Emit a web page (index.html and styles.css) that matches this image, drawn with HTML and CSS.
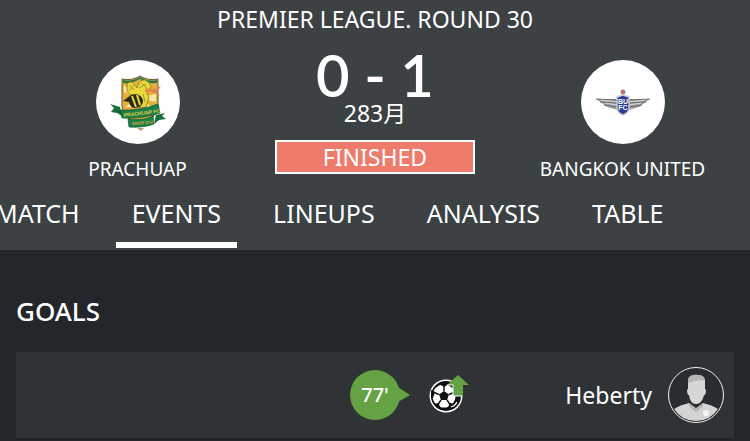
FILE: index.html
```
<!DOCTYPE html>
<html lang="en">
<head>
<meta charset="utf-8">
<meta name="viewport" content="width=device-width, initial-scale=1">
<title>Prachuap 0 - 1 Bangkok United</title>
<link rel="stylesheet" href="styles.css">
</head>
<body>
<header class="match">
  <h1 class="league">PREMIER LEAGUE. ROUND 30</h1>
  <div class="scoreboard">
    <div class="team">
      <span class="crest">
        <svg viewBox="0 0 76 76" width="76" height="76" aria-hidden="true">
          <path d="M22 15Q32 17 40 12Q48 17 58 15V43Q56 55 40 61Q24 55 22 43Z" fill="#e7ad3d" stroke="#5c5a38" stroke-width="1"/>
          <path d="M23 16Q32 18 40 13Q48 18 57 16V19Q48 20 40 15Q32 20 23 19Z" fill="#28764a"/>
          <path d="M38 34L24 21V28ZM38 34L25 43H33ZM38 34L30 20H35ZM38 34L56 30V38ZM38 34L47 45H55Z" fill="#fae7a4"/>
          <path d="M27 20Q31 16 34 20L37 24L39 18Q45 13 50 20Q53 25 46 27L49 33L46 43L39 44L43 37L37 31Q29 32 27 27Z" fill="#e9d839" stroke="#817928" stroke-width=".8"/>
          <path d="M29 21l5 5m-5 1l5-6m7-2l6 5m-8 0l7-4m-3 10l2 8" stroke="#8d8828" stroke-width=".8" fill="none"/>
          <path d="M23 37L31 31Q40 28 43 36Q43 44 34 44Q30 43 29 38Z" fill="#292a1d"/>
          <path d="M32 32l4 11M37 31l3 10" stroke="#ecdb39" stroke-width="2"/>
          <path d="M46 24Q53 27 61 22L57 28L60 32Q52 26 45 28Z" fill="#df854d"/>
          <path d="M20 43L10 40L14 44L11 48L17 49L22 52ZM56 51L65 49L62 52L66 55L59 56L54 60Z" fill="#176c3e"/>
          <path d="M20 46Q40 47 58 40L60 49Q43 55 22 54Z" fill="#188246" stroke="#115130" stroke-width=".7"/>
          <path d="M28 55Q44 57 53 52L54 60Q43 64 29 63Z" fill="#188246" stroke="#115130" stroke-width=".7"/>
          <path d="M37 64h7l-3 3z" fill="#b6a073"/>
          <text class="crest-name" x="24" y="53" transform="rotate(-7 24 53)">PRACHUAP FC</text>
          <text class="crest-year" x="32" y="61" transform="rotate(-5 32 61)">SINCE 2011</text>
        </svg>
      </span>
      <span class="team-name">PRACHUAP</span>
    </div>
    <div class="result">
      <strong class="score">0 - 1</strong>
      <span class="date">283月</span>
      <span class="status">FINISHED</span>
    </div>
    <div class="team away">
      <span class="crest">
        <svg viewBox="0 0 66 44" width="66" height="44" aria-hidden="true">
          <path d="M6 19H26L29 23L27 30L17 27Z" fill="#a2a2a2"/>
          <path d="M60 19H40L37 23L39 30L49 27Z" fill="#a2a2a2"/>
          <path d="M6 19L27 20M10 22L27 23M14 25L27 27M60 19L39 20M56 22L39 23M52 25L39 27" stroke="#545759" stroke-width=".8"/>
          <path d="M11 20L27 22M15 23L27 25M55 20L39 22M51 23L39 25" stroke="#e5e5e5" stroke-width=".8"/>
          <path d="M27 17L33 15L39 17V29Q38 33 33 35Q28 33 27 29Z" fill="#293c91" stroke="#c8c9ce" stroke-width="1.5"/>
          <circle cx="33" cy="12" r="2.2" fill="#ce6862" stroke="#909296" stroke-width=".8"/>
          <text class="shield-text" x="33" y="24">BU</text>
          <text class="shield-text" x="33" y="30">FC</text>
        </svg>
      </span>
      <span class="team-name">BANGKOK UNITED</span>
    </div>
  </div>
  <nav class="tabs" aria-label="Match sections">
    <a class="tab" href="#match">MATCH</a>
    <a class="tab active" href="#events" aria-current="page">EVENTS</a>
    <a class="tab" href="#lineups">LINEUPS</a>
    <a class="tab" href="#analysis">ANALYSIS</a>
    <a class="tab" href="#table">TABLE</a>
  </nav>
</header>
<main class="events" id="events">
  <h2 class="heading">GOALS</h2>
  <div class="event">
    <span class="minute">77'</span>
    <div class="details">
      <svg class="pointer" viewBox="0 0 12 16" width="12" height="16" aria-hidden="true"><path d="M0 0L12 8L0 15Z" fill="#65a244"/></svg>
      <svg class="goal" viewBox="0 0 42 42" width="42" height="42" role="img" aria-label="Goal">
        <circle cx="18" cy="22" r="16.5" fill="#fff"/>
        <circle cx="18" cy="22" r="15" fill="#111"/>
        <circle cx="16" cy="22" r="11.5" fill="#fff"/>
        <path d="M16 17L21 20.500L19 26H13L11 20.500Z" fill="#111"/>
        <path d="M16 17V10M21 20.500L27 18M19 26L23 32M13 26L9 32M11 20.500L5 18" stroke="#111" stroke-width="1.4"/>
        <path d="M11 10L16 13L21 10L16 8ZM3 16L7 18L5 24L3 25ZM6 30L10 29L13 34L9 34ZM19 35L22 29L27 30L24 35ZM26 15L25 20L29 24L32 22V14Z" fill="#111"/>
        <path d="M23 33Q27 32 29 28" stroke="#fff" stroke-width="1.2" fill="none"/>
        <path d="M30 1L41 11H35V22H25V11H19Z" fill="#65a244"/>
        <path d="M19 11H25V22H34" fill="none" stroke="#fff" stroke-width="1"/>
      </svg>
      <span class="player-name">Heberty</span>
      <svg class="avatar" viewBox="0 0 56 56" width="56" height="56" aria-hidden="true">
        <circle cx="28" cy="28" r="27.5" fill="#292d30" stroke="#f2f2f2" stroke-width="1"/>
        <path d="M6 42Q12 38 21 36L28 42L35 36Q44 38 50 42Q42 54 28 54Q14 54 6 42Z" fill="#d3d3d3"/>
        <path d="M21 36L28 41L35 36V39L28 45L21 39Z" fill="#b2b2b2"/>
        <path d="M20 13Q22 7 30 8Q36 8 37 13V22Q39 22 37 28H36Q34 37 28 37Q22 37 21 28H20Q18 22 20 22Z" fill="#d6d6d6"/>
        <path d="M20 16V12Q22 7 30 8Q36 8 37 14Q30 12 20 16Z" fill="#b4b4b4"/>
        <path d="M35 44L38 43L41 44V47Q40 49 38 50Q36 49 35 47Z" fill="#f5f5f5"/>
      </svg>
    </div>
  </div>
</main>
</body>
</html>
```
FILE: styles.css
```
* { box-sizing: border-box; }
body {
  margin: 0;
  background: #23262b;
  color: #fff;
  font-family: "Noto Sans", "Noto Sans CJK JP", sans-serif;
  overflow-x: hidden;
}
.match { background: #3c4144; }
.league {
  margin: 0;
  font-size: 23px;
  font-weight: 400;
  line-height: 38px;
  text-align: center;
}
.scoreboard {
  display: grid;
  grid-template-columns: 1fr 200px 1fr;
}
.team {
  display: flex;
  flex-direction: column;
  align-items: center;
  padding-top: 22px;
}
.away { padding-left: 20px; }
.crest {
  display: flex;
  align-items: center;
  justify-content: center;
  width: 84px;
  height: 84px;
  border-radius: 50%;
  background: #fff;
}
.crest-name { font: bold 5px "Liberation Sans", sans-serif; fill: #e7c64b; }
.crest-year { font: bold 4px "Liberation Sans", sans-serif; fill: #e0a243; }
.shield-text { font: bold 7px "Liberation Sans", sans-serif; fill: #fff; text-anchor: middle; }
.team-name {
  margin-top: 12px;
  font-size: 19px;
  line-height: 26px;
  white-space: nowrap;
}
.result {
  display: flex;
  flex-direction: column;
  align-items: center;
  padding-top: 12px;
}
.score {
  font-family: Lato, "Noto Sans", sans-serif;
  font-size: 58px;
  font-weight: 600;
  line-height: 50px;
}
.date { font-size: 23px; line-height: 26px; }
.status {
  width: 100%;
  margin-top: 14px;
  border: 2px solid #fff;
  background: #ef7b6c;
  font-size: 23px;
  line-height: 30px;
  text-align: center;
}
.tabs {
  display: flex;
  gap: 20px;
  margin-left: -21px;
  padding: 2px 0;
}
.tab {
  padding: 0 16px;
  border-bottom: 6px solid transparent;
  color: #fff;
  font-size: 25px;
  line-height: 58px;
  text-decoration: none;
}
.active { border-color: #fff; }
.events { padding: 40px 16px 0; }
.heading {
  margin: 0;
  font-size: 26px;
  font-weight: 500;
  line-height: 42px;
}
.event {
  display: grid;
  grid-template-columns: 1fr 50px 1fr;
  align-items: center;
  margin-top: 20px;
  padding: 15px 10px;
  background: #2f3335;
}
.minute {
  grid-column: 2;
  border-radius: 50%;
  background: #65a244;
  font-size: 20px;
  font-weight: 500;
  line-height: 50px;
  text-align: center;
}
.details {
  display: flex;
  align-items: center;
}
.pointer { margin-left: -2px; }
.goal { margin-left: 18px; }
.player-name {
  margin: 0 16px 0 auto;
  font-size: 23px;
}
```
